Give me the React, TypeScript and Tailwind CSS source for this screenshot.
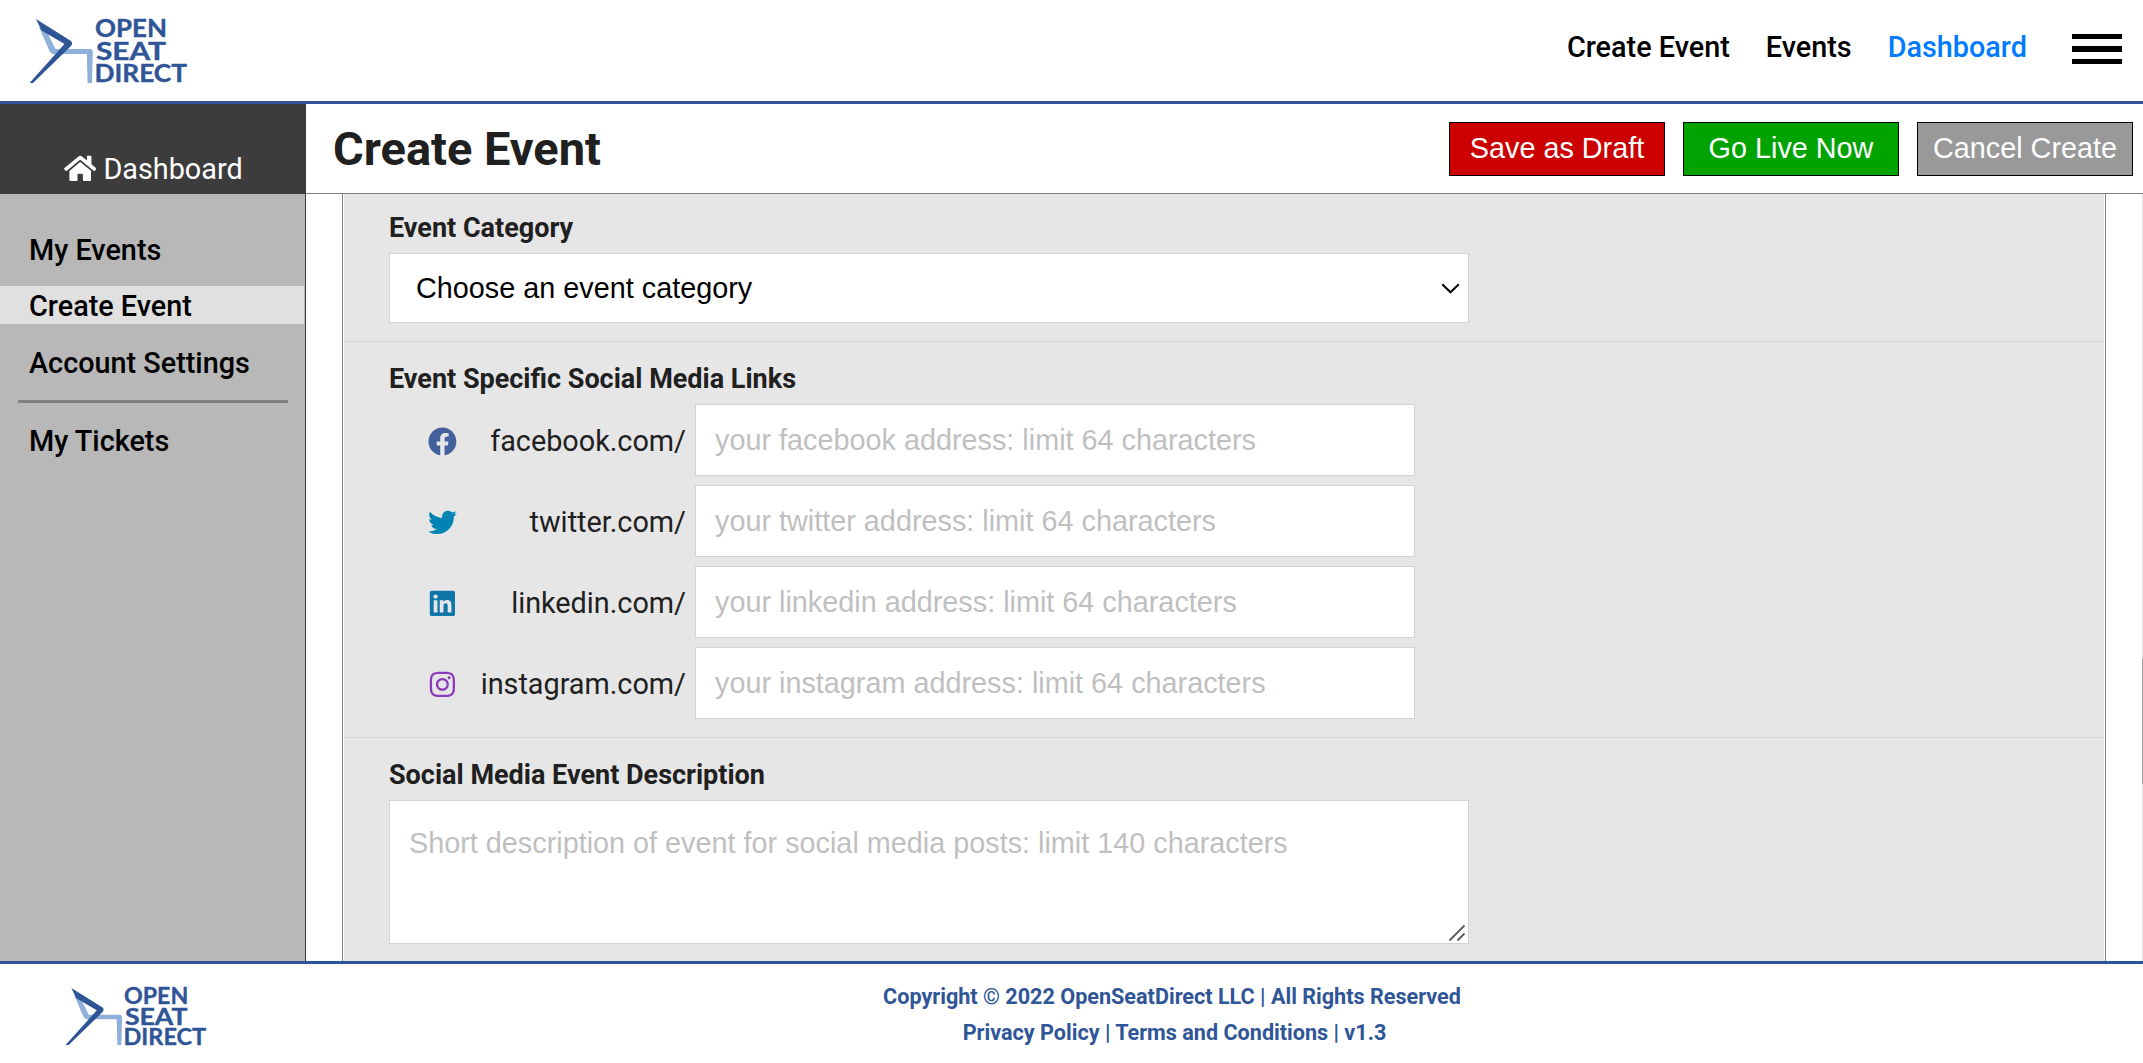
import type { IconType } from "react-icons";
import { FaFacebook, FaHome, FaInstagram, FaLinkedin, FaTwitter } from "react-icons/fa";

const socials: { Icon: IconType; color: string; domain: string; name: string }[] = [
  { Icon: FaFacebook, color: "text-[#43609c]", domain: "facebook.com/", name: "facebook" },
  { Icon: FaTwitter, color: "text-[#0084b4]", domain: "twitter.com/", name: "twitter" },
  { Icon: FaLinkedin, color: "text-[#0e76a8]", domain: "linkedin.com/", name: "linkedin" },
  { Icon: FaInstagram, color: "text-[#8a3ab9]", domain: "instagram.com/", name: "instagram" },
];

function Logo({ className }: { className: string }) {
  return (
    <svg viewBox="0 0 158 66" className={className} role="img" aria-label="Open Seat Direct">
      <path d="M9 9 L16 12 L25.5 31 H60 Q62.8 31 62.8 34 L62 65 H57.6 L56.8 36 H22 L19.5 33 Z" fill="#8fb0da" />
      <path d="M6 1 L41 23 Q43.2 25.5 41 28 L3 65 H-0.5 L34.5 26 L11.5 12.5 Z" fill="#2f5597" />
      <g fill="#2f5597" stroke="#2f5597" strokeWidth="0.4" fontFamily="Lato, sans-serif" fontWeight="700" fontSize="25">
        <text x="65" y="18.8" textLength="72" lengthAdjust="spacingAndGlyphs">OPEN</text>
        <text x="66" y="42" textLength="70" lengthAdjust="spacingAndGlyphs">SEAT</text>
        <text x="64.5" y="64.4" textLength="92.5" lengthAdjust="spacingAndGlyphs">DIRECT</text>
      </g>
    </svg>
  );
}

function Header() {
  return (
    <header className="flex h-[104px] shrink-0 items-start border-b-3 border-[#2f5597] bg-white pr-[21px] pl-[30px]">
      <Logo className="mt-[18px] h-[66px] w-[158px] overflow-visible" />
      <nav className="mt-[29px] ml-auto flex gap-[36px] text-[28.8px] leading-[36px] font-medium text-black">
        <a>Create Event</a>
        <a>Events</a>
        <a className="text-[#007bff]">Dashboard</a>
      </nav>
      <button aria-label="Menu" className="mt-[34px] ml-[45px] flex w-[50px] flex-col justify-between">
        <span className="h-[5px] bg-black" />
        <span className="mt-[7px] h-[6px] bg-black" />
        <span className="mt-[7px] h-[5px] bg-black" />
      </button>
    </header>
  );
}

function Sidebar() {
  const item = "h-[38px] pt-[2px] pl-[29px] leading-[36px]";
  return (
    <aside className="flex w-[306px] shrink-0 flex-col">
      <div className="flex h-[90px] shrink-0 items-start gap-[7px] bg-[#3c3c3c] pt-[47px] pl-16 text-[28.8px] leading-[36px] text-white">
        <FaHome className="mt-[3px] h-[28.8px] w-[32.4px]" />
        <span>Dashboard</span>
      </div>
      <div className="flex flex-1 flex-col border-r border-[#3c3c3c] bg-[#b8b8b8] pt-[36px] text-[28.8px] font-medium text-black">
        <div className={item}>My Events</div>
        <div className={`${item} mt-[18px] mr-px bg-[#e0e0e0]`}>Create Event</div>
        <div className={`${item} mt-[19px]`}>Account Settings</div>
        <div className="mt-[19px] mr-[17px] ml-[18px] h-[3px] bg-[#808080]" />
        <div className={`${item} mt-[18px]`}>My Tickets</div>
      </div>
    </aside>
  );
}

function TitleBar() {
  const button =
    "h-[54px] w-[216px] border border-black text-center font-['Liberation_Sans',sans-serif] text-[28.8px] leading-[50px] text-white";
  return (
    <div className="flex h-[90px] shrink-0 items-start border-b border-[#808080] pr-[10px] pl-[27px]">
      <h1 className="mt-[16px] text-[47px] leading-[57px] font-bold">Create Event</h1>
      <div className="mt-[18px] ml-auto flex gap-[18px]">
        <div className={`${button} bg-[#cc0000]`}>Save as Draft</div>
        <div className={`${button} bg-[#00a300]`}>Go Live Now</div>
        <div className={`${button} bg-[#999999]`}>Cancel Create</div>
      </div>
    </div>
  );
}

function Form() {
  const label = "text-[27px] leading-[32px] font-bold";
  const field = "border border-[#d3d3d3] bg-white font-['Liberation_Sans',sans-serif] text-[28.8px]";
  return (
    <div className="mr-[36px] ml-[36px] flex flex-1 border-x border-[#808080] px-px">
      <div className="flex-1 overflow-hidden bg-[#e6e6e6]">
        <section className="border-b border-[#d3d3d3] pt-[18px] pb-[18px] pl-[45px]">
          <h2 className={label}>Event Category</h2>
          <div className={`${field} mt-[9px] flex h-[70px] w-[1080px] items-center justify-between pr-[8px] pl-[26px] leading-[68px] text-black`}>
            <span>Choose an event category</span>
            <svg viewBox="0 0 19 11" className="mt-px h-[11px] w-[19px]" fill="none" stroke="#000" strokeWidth="2">
              <path d="M1.2 1.2 L9.5 9.3 L17.8 1.2" />
            </svg>
          </div>
        </section>
        <section className="border-b border-[#d3d3d3] pt-[21px] pb-[18px] pl-[45px]">
          <h2 className={label}>Event Specific Social Media Links</h2>
          <div className="mt-[9px] flex flex-col gap-[9px]">
            {socials.map(({ Icon, color, domain, name }) => (
              <div key={name} className="flex h-[72px] items-center">
                <div className="mt-[3px] ml-[36px] flex w-[35px] justify-center">
                  <Icon className={`size-[28.8px] ${color}`} />
                </div>
                <div className="h-[72px] w-[226px] text-right text-[28.8px] leading-[74px]">{domain}</div>
                <div className={`${field} ml-[9px] h-[72px] w-[720px] pl-[19px] leading-[70px] text-[#bfbfbf]`}>
                  your {name} address: limit 64 characters
                </div>
              </div>
            ))}
          </div>
        </section>
        <section className="pt-[21px] pl-[45px]">
          <h2 className={label}>Social Media Event Description</h2>
          <div className={`${field} mt-[9px] flex h-[144px] w-[1080px] items-end justify-between pr-[2px] pb-[1px] pl-[19px] leading-[36px] text-[#bfbfbf]`}>
            <span className="mt-[24px] self-start">Short description of event for social media posts: limit 140 characters</span>
            <svg viewBox="0 0 18 18" className="size-[18px]" stroke="#5a5a5a" strokeWidth="1.8">
              <path d="M1.5 16.5 L16.5 1.5 M9.5 16.5 L16.5 9.5" />
            </svg>
          </div>
        </section>
      </div>
    </div>
  );
}

function Footer() {
  return (
    <footer className="flex h-[102px] shrink-0 items-start border-t-3 border-[#2f5597] bg-white">
      <div className="w-[206px] shrink-0 pl-[66px]">
        <Logo className="mt-[23px] h-[59px] w-[141px] overflow-visible" />
      </div>
      <div className="mt-[15px] flex-1 pr-[5px] text-center text-[21.6px] leading-[36px] font-bold text-[#2f5597]">
        <div>Copyright © 2022 OpenSeatDirect LLC | All Rights Reserved</div>
        <div className="pl-[5px]">Privacy Policy | Terms and Conditions | v1.3</div>
      </div>
    </footer>
  );
}

export default function App() {
  return (
    <div className="flex h-[1063px] flex-col overflow-hidden bg-white font-[Roboto,sans-serif] text-[#202020]">
      <Header />
      <div className="flex flex-1 overflow-hidden">
        <Sidebar />
        <main className="flex flex-1 flex-col">
          <TitleBar />
          <div className="flex flex-1 overflow-hidden">
            <Form />
            <div className="w-px bg-[#e0e0e0] pt-[465px]">
              <div className="h-[125px] bg-[#a0a0a0]" />
            </div>
          </div>
        </main>
      </div>
      <Footer />
    </div>
  );
}
